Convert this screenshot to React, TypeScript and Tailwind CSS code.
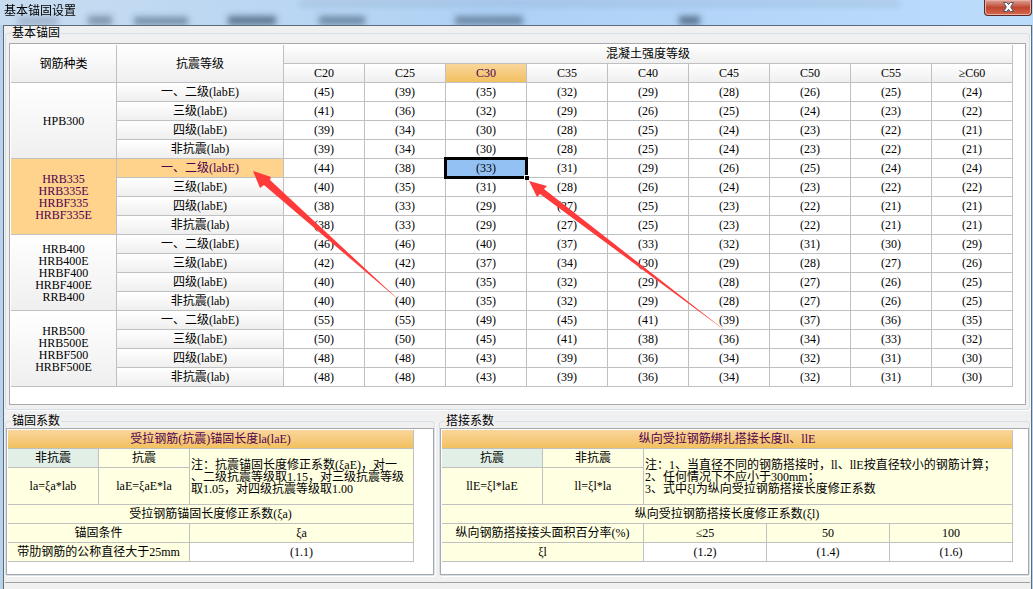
import { ReactNode } from "react";

type SteelGroup = {
  names: string[];
  rows: number[][];
};

const GRADES = ["C20", "C25", "C30", "C35", "C40", "C45", "C50", "C55", "≥C60"];
const LEVELS = ["一、二级(labE)", "三级(labE)", "四级(labE)", "非抗震(lab)"];
const SELECTED = { group: 1, row: 0, column: 2 };

const GROUPS: SteelGroup[] = [
  {
    names: ["HPB300"],
    rows: [
      [45, 39, 35, 32, 29, 28, 26, 25, 24],
      [41, 36, 32, 29, 26, 25, 24, 23, 22],
      [39, 34, 30, 28, 25, 24, 23, 22, 21],
      [39, 34, 30, 28, 25, 24, 23, 22, 21],
    ],
  },
  {
    names: ["HRB335", "HRB335E", "HRBF335", "HRBF335E"],
    rows: [
      [44, 38, 33, 31, 29, 26, 25, 24, 24],
      [40, 35, 31, 28, 26, 24, 23, 22, 22],
      [38, 33, 29, 27, 25, 23, 22, 21, 21],
      [38, 33, 29, 27, 25, 23, 22, 21, 21],
    ],
  },
  {
    names: ["HRB400", "HRB400E", "HRBF400", "HRBF400E", "RRB400"],
    rows: [
      [46, 46, 40, 37, 33, 32, 31, 30, 29],
      [42, 42, 37, 34, 30, 29, 28, 27, 26],
      [40, 40, 35, 32, 29, 28, 27, 26, 25],
      [40, 40, 35, 32, 29, 28, 27, 26, 25],
    ],
  },
  {
    names: ["HRB500", "HRB500E", "HRBF500", "HRBF500E"],
    rows: [
      [55, 55, 49, 45, 41, 39, 37, 36, 35],
      [50, 50, 45, 41, 38, 36, 34, 33, 32],
      [48, 48, 43, 39, 36, 34, 32, 31, 30],
      [48, 48, 43, 39, 36, 34, 32, 31, 30],
    ],
  },
];

const CELL = "h-[19px] border-r border-b border-[#c0c0c0] p-0 text-center font-normal";
const HEAD = "bg-linear-to-b from-white to-[#efefef]";
const ACTIVE_HEAD = "bg-linear-to-b from-[#fad69b] to-[#f2c05e] text-[#500050]";
const ACTIVE = "bg-[#ffd38c] text-[#500050]";
const CREAM = "bg-[#ffffe1]";
const MINT = "bg-[#e1efe6]";

function Group({ title, children }: { title: string; children: ReactNode }) {
  return (
    <fieldset className="min-w-0 rounded-[3px] border border-[#d5dfe5] shadow-[1px_1px_0_#fff]">
      <legend className="ml-[5px] bg-[#f0f0f0] px-px leading-[14px]">{title}</legend>
      {children}
    </fieldset>
  );
}

function TitleBar() {
  return (
    <header className="relative flex h-[25px] items-start justify-between overflow-hidden bg-linear-to-r from-[#c8dcf0] via-[#aed1f5] to-[#bcdcfc]">
      <svg className="absolute inset-0 h-full w-full" aria-hidden="true">
        <defs>
          <filter id="glass" x="-20%" y="-100%" width="140%" height="300%">
            <feGaussianBlur stdDeviation="3" />
          </filter>
        </defs>
        <g filter="url(#glass)" fill="#28405c">
          <rect x="18" y="17" width="40" height="8" opacity="0.25" />
          <rect x="88" y="16" width="24" height="9" opacity="0.45" />
          <rect x="134" y="17" width="54" height="8" opacity="0.5" />
          <rect x="228" y="16" width="48" height="9" opacity="0.65" />
          <rect x="319" y="16" width="46" height="9" opacity="0.5" />
          <rect x="455" y="16" width="68" height="9" opacity="0.5" />
          <rect x="679" y="16" width="21" height="9" opacity="0.65" />
          <rect x="300" y="0" width="600" height="6" opacity="0.12" />
        </g>
      </svg>
      <h1 className="relative ml-1 mt-[3px] text-[12px] leading-[16px]">基本锚固设置</h1>
      <button
        type="button"
        aria-label="关闭"
        className="relative mr-px flex h-4 w-[48px] items-center justify-center rounded-b-[4px] border border-t-0 border-[#5b2a28] bg-linear-to-b from-[#dca196] via-[#c04630] to-[#d5684b] shadow-[inset_0_0_0_1px_#e9b1a6]"
      >
        <svg width="13" height="12" viewBox="0 0 13 12" className="mb-[2px]">
          <path
            d="M1.5 1.5h3.2l1.8 2.2 1.8-2.2h3.2L8.7 6l2.8 4.5H8.3L6.5 8.3l-1.8 2.2H1.5L4.3 6z"
            fill="#fff"
            stroke="#4c5466"
            strokeWidth="1"
          />
        </svg>
      </button>
    </header>
  );
}

function AnchorTable() {
  return (
    <table className="w-full table-fixed border-separate border-spacing-0">
      <colgroup>
        <col className="w-[106px]" />
        <col className="w-[167px]" />
        {GRADES.map((grade) => (
          <col key={grade} />
        ))}
      </colgroup>
      <thead>
        <tr>
          <th rowSpan={2} className={`${CELL} ${HEAD}`}>钢筋种类</th>
          <th rowSpan={2} className={`${CELL} ${HEAD}`}>抗震等级</th>
          <th colSpan={9} className={`${CELL} ${HEAD}`}>混凝土强度等级</th>
        </tr>
        <tr>
          {GRADES.map((grade, column) => (
            <th key={grade} className={`${CELL} ${column === SELECTED.column ? ACTIVE_HEAD : HEAD}`}>
              {grade}
            </th>
          ))}
        </tr>
      </thead>
      <tbody>
        {GROUPS.map((group, groupIndex) =>
          group.rows.map((values, row) => {
            const activeRow = groupIndex === SELECTED.group && row === SELECTED.row;
            return (
              <tr key={`${group.names[0]}-${row}`}>
                {row === 0 && (
                  <th rowSpan={4} className={`${CELL} leading-[12px] ${activeRow ? ACTIVE : HEAD}`}>
                    {group.names.map((name) => (
                      <div key={name}>{name}</div>
                    ))}
                  </th>
                )}
                <th className={`${CELL} ${activeRow ? ACTIVE : HEAD}`}>{LEVELS[row]}</th>
                {values.map((value, column) =>
                  activeRow && column === SELECTED.column ? (
                    <td key={column} className={`${CELL} relative bg-[#94c1f3]`}>
                      ({value})
                      <span className="absolute -inset-[2px] border-3 border-black" />
                      <span className="absolute -right-[3px] -bottom-[3px] size-[5px] border-t border-l border-white bg-black" />
                    </td>
                  ) : (
                    <td key={column} className={CELL}>({value})</td>
                  ),
                )}
              </tr>
            );
          }),
        )}
      </tbody>
    </table>
  );
}

function FactorTable() {
  return (
    <table className="w-full table-fixed border-separate border-spacing-0">
      <colgroup>
        <col className="w-[91px]" />
        <col className="w-[91px]" />
        <col />
      </colgroup>
      <tbody>
        <tr>
          <th colSpan={3} className={`${CELL} ${ACTIVE_HEAD}`}>受拉钢筋(抗震)锚固长度la(laE)</th>
        </tr>
        <tr>
          <th className={`${CELL} ${MINT}`}>非抗震</th>
          <th className={`${CELL} ${CREAM}`}>抗震</th>
          <td rowSpan={2} className={`${CELL} ${CREAM}`}>
            <p className="px-px text-left leading-[12px] whitespace-nowrap">
              注：抗震锚固长度修正系数(ξaE)，对一
              <br />
              、二级抗震等级取1.15，对三级抗震等级
              <br />
              取1.05，对四级抗震等级取1.00
            </p>
          </td>
        </tr>
        <tr className="h-[37px]">
          <td className={`${CELL} ${CREAM}`}>la=ξa*lab</td>
          <td className={`${CELL} ${CREAM}`}>laE=ξaE*la</td>
        </tr>
        <tr>
          <th colSpan={3} className={`${CELL} ${CREAM}`}>受拉钢筋锚固长度修正系数(ξa)</th>
        </tr>
        <tr>
          <th colSpan={2} className={`${CELL} ${CREAM}`}>锚固条件</th>
          <th className={`${CELL} ${CREAM}`}>ξa</th>
        </tr>
        <tr>
          <th colSpan={2} className={`${CELL} ${CREAM}`}>带肋钢筋的公称直径大于25mm</th>
          <td className={CELL}>(1.1)</td>
        </tr>
      </tbody>
    </table>
  );
}

function LapTable() {
  return (
    <table className="w-full table-fixed border-separate border-spacing-0">
      <colgroup>
        <col className="w-[101px]" />
        <col className="w-[101px]" />
        <col />
        <col />
        <col />
      </colgroup>
      <tbody>
        <tr>
          <th colSpan={5} className={`${CELL} ${ACTIVE_HEAD}`}>纵向受拉钢筋绑扎搭接长度ll、llE</th>
        </tr>
        <tr>
          <th className={`${CELL} ${MINT}`}>抗震</th>
          <th className={`${CELL} ${CREAM}`}>非抗震</th>
          <td colSpan={3} rowSpan={2} className={`${CELL} ${CREAM}`}>
            <p className="px-px text-left leading-[12px] whitespace-nowrap">
              注：1、当直径不同的钢筋搭接时，ll、llE按直径较小的钢筋计算；
              <br />
              2、任何情况下不应小于300mm；
              <br />
              3、式中ξl为纵向受拉钢筋搭接长度修正系数
            </p>
          </td>
        </tr>
        <tr className="h-[37px]">
          <td className={`${CELL} ${CREAM}`}>llE=ξl*laE</td>
          <td className={`${CELL} ${CREAM}`}>ll=ξl*la</td>
        </tr>
        <tr>
          <th colSpan={5} className={`${CELL} ${CREAM}`}>纵向受拉钢筋搭接长度修正系数(ξl)</th>
        </tr>
        <tr>
          <th colSpan={2} className={`${CELL} ${CREAM}`}>纵向钢筋搭接接头面积百分率(%)</th>
          <th className={`${CELL} ${CREAM}`}>≤25</th>
          <th className={`${CELL} ${CREAM}`}>50</th>
          <th className={`${CELL} ${CREAM}`}>100</th>
        </tr>
        <tr>
          <th colSpan={2} className={`${CELL} ${CREAM}`}>ξl</th>
          <td className={CELL}>(1.2)</td>
          <td className={CELL}>(1.4)</td>
          <td className={CELL}>(1.6)</td>
        </tr>
      </tbody>
    </table>
  );
}

export default function App() {
  return (
    <div className="min-h-screen bg-[#b9d1ea] font-['Liberation_Serif','Noto_Sans_CJK_SC',serif] text-[12px] leading-[16px] text-black">
      <TitleBar />
      <main className="mr-px ml-[3px] flex min-h-[calc(100vh-25px)] flex-col border border-b-0 border-[#5a6b7c] bg-[#f0f0f0] px-px">
        <Group title="基本锚固">
          <div className="relative mx-[3px] mt-[3px] mb-1 border border-[#a7a9ac] bg-white pt-px pr-3 pb-[17px] pl-px">
            <AnchorTable />
            <svg
              width="490"
              height="180"
              viewBox="0 0 490 180"
              className="pointer-events-none absolute top-[120px] left-[240px]"
              fill="#ff3a3a"
              aria-hidden="true"
            >
              <path d="M3 7 21 13 20 16 150 137 14 21 10 24Z" />
              <path d="M279 17 297 22 294 25 477 168 290 30 287 33Z" />
            </svg>
          </div>
        </Group>
        <div className="mt-1 grid grid-cols-[430fr_591fr] gap-1">
          <Group title="锚固系数">
            <div className="border border-[#a7a9ac] bg-white pt-px pr-[19px] pb-3 pl-px">
              <FactorTable />
            </div>
          </Group>
          <Group title="搭接系数">
            <div className="border border-[#a7a9ac] bg-white pt-px pr-[15px] pb-3 pl-px">
              <LapTable />
            </div>
          </Group>
        </div>
        <hr className="mt-[6px] border-[#a0a0a0]" />
      </main>
    </div>
  );
}
